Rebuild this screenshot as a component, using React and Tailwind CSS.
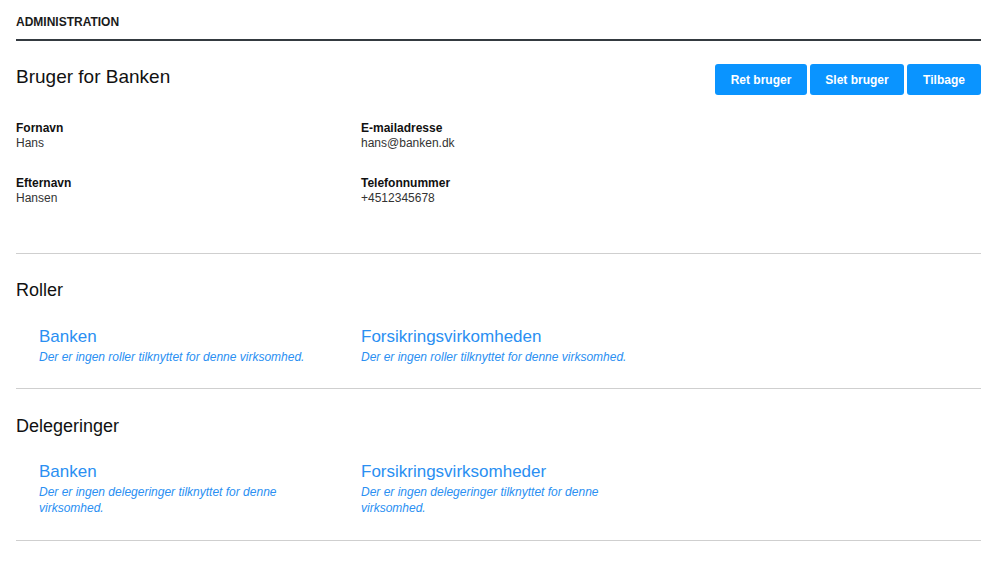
import React from "react";

const fields = [
  [
    { label: "Fornavn", value: "Hans" },
    { label: "Efternavn", value: "Hansen" },
  ],
  [
    { label: "E-mailadresse", value: "hans@banken.dk" },
    { label: "Telefonnummer", value: "+4512345678" },
  ],
];

const roller = [
  { name: "Banken", text: "Der er ingen roller tilknyttet for denne virksomhed." },
  { name: "Forsikringsvirkomheden", text: "Der er ingen roller tilknyttet for denne virksomhed." },
];

const delegeringer = [
  { name: "Banken", text: "Der er ingen delegeringer tilknyttet for denne virksomhed." },
  { name: "Forsikringsvirksomheder", text: "Der er ingen delegeringer tilknyttet for denne virksomhed." },
];

const Field = ({ label, value }) => (
  <div>
    <div className="text-[12px] leading-[15px] font-bold text-[#111]">{label}</div>
    <div className="text-[12px] leading-[15px] text-[#333]">{value}</div>
  </div>
);

const Company = ({ name, text }) => (
  <div>
    <div className="text-[17px] leading-[22px] text-[#2a8ff2]">{name}</div>
    <div className="mt-[1px] w-[285px] text-[12px] leading-[16px] italic text-[#2a8ff2]">{text}</div>
  </div>
);

const Section = ({ title, items, top, gap }) => (
  <div>
    <h2 className={`${top} text-[18px] leading-[24px] text-[#111]`}>{title}</h2>
    <div className={`grid grid-cols-[322px_1fr] pl-[23px] ${gap}`}>
      {items.map((it) => (
        <Company key={it.name} {...it} />
      ))}
    </div>
  </div>
);

const App = () => {
  return (
    <div className="min-h-[566px] bg-white pl-4 pr-[19px] font-['Liberation_Sans',Arial,sans-serif]">
      <div className="pt-[14px] text-[12px] leading-[16px] font-bold text-[#1a1a1a]">ADMINISTRATION</div>
      <div className="mt-[9px] h-[2px] bg-[#343a40]" />

      <div className="mt-[23px] flex items-start justify-between">
        <h1 className="mt-[1px] text-[19px] leading-[24px] text-[#111]">Bruger for Banken</h1>
        <div className="flex gap-[3px]">
          {["Ret bruger", "Slet bruger", "Tilbage"].map((b, i) => (
            <button
              key={b}
              className={`h-[31px] rounded-[3px] bg-[#0a94ff] text-[12px] font-bold text-white ${
                i === 0 ? "w-[92px]" : i === 1 ? "w-[94px]" : "w-[74px]"
              }`}
            >
              {b}
            </button>
          ))}
        </div>
      </div>

      <div className="mt-[26px] grid grid-cols-[345px_1fr]">
        {fields.map((col, i) => (
          <div key={i} className="flex flex-col gap-[25px]">
            {col.map((f) => (
              <Field key={f.label} {...f} />
            ))}
          </div>
        ))}
      </div>

      <div className="mt-[47px] h-px bg-[#cfcfcf]" />
      <Section title="Roller" items={roller} top="mt-[24px]" gap="mt-[24px]" />
      <div className="mt-[23px] h-px bg-[#cfcfcf]" />
      <Section title="Delegeringer" items={delegeringer} top="mt-[25px]" gap="mt-[23px]" />
      <div className="mt-[24px] h-px bg-[#cfcfcf]" />
    </div>
  );
};

export default App;
